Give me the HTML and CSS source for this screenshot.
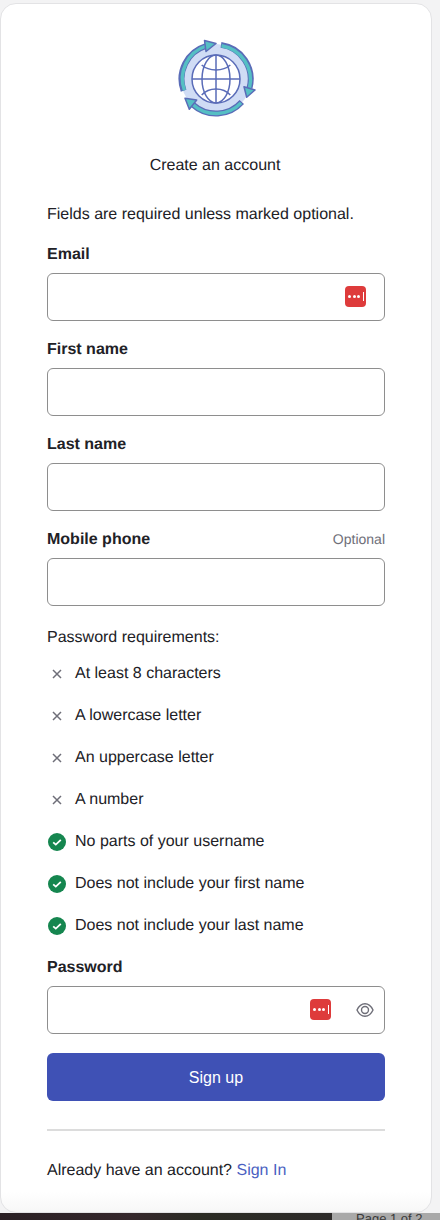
FILE: index.html
```html
<!DOCTYPE html>
<html lang="en">
<head>
    <meta charset="UTF-8">
    <meta name="viewport" content="width=device-width, initial-scale=1.0">
    <title>Create an account</title>
    <link rel="stylesheet" href="styles.css">
</head>
<body>
    <div class="card">
        <div class="logo">
            <svg width="80" height="82" viewBox="0 0 80 82" fill="none">
                <circle cx="40" cy="41" r="35" fill="#d0dcf5"/>
                <g stroke="#5a6cb8" stroke-width="6">
                    <path d="M30 8A34.500 34.500 0 0 0 7.600 52.800"/>
                    <path d="M45 6.900A34.500 34.500 0 0 1 73.500 50"/>
                    <path d="M65.800 64A34.500 34.500 0 0 1 17 66.700"/>
                </g>
                <g stroke="#55bfc4" stroke-width="3.400">
                    <path d="M30 8A34.500 34.500 0 0 0 8.400 52.300"/>
                    <path d="M45.500 7.800A34.500 34.500 0 0 1 73.500 50"/>
                    <path d="M65 64.800A34.500 34.500 0 0 1 17 66.700"/>
                </g>
                <g fill="#55bfc4" stroke="#5a6cb8" stroke-width="1.500" stroke-linejoin="round">
                    <path d="M28.500 2.500L40 5.500L30 13.500Z"/>
                    <path d="M68 48.700L79 52L70.700 59.300Z"/>
                    <path d="M9 60.300L20.700 62L13.300 71.300Z"/>
                </g>
                <g stroke="#5a6cb8" stroke-width="1.500">
                    <circle cx="40" cy="41" r="24" fill="#fff"/>
                    <ellipse cx="40" cy="41" rx="14" ry="24"/>
                    <path d="M40 17V65M16 41H64"/>
                    <path d="M25.700 27C33 33.500 47 33.500 54.300 27M25.700 57C33 49 47 49 54.300 57"/>
                </g>
            </svg>
        </div>
        <h1 class="title">Create an account</h1>
        <p class="hint">Fields are required unless marked optional.</p>

        <form class="signup">
            <div class="form-group">
                <label for="email">Email</label>
                <div class="field">
                    <input type="text" id="email">
                    <span class="key-icon"><i></i><i></i><i></i><b></b></span>
                </div>
            </div>
            <div class="form-group">
                <label for="firstName">First name</label>
                <div class="field"><input type="text" id="firstName"></div>
            </div>
            <div class="form-group">
                <label for="lastName">Last name</label>
                <div class="field"><input type="text" id="lastName"></div>
            </div>
            <div class="form-group">
                <div class="label-row">
                    <label for="phone">Mobile phone</label>
                    <span class="optional">Optional</span>
                </div>
                <div class="field"><input type="text" id="phone"></div>
            </div>

            <p class="req-title">Password requirements:</p>
            <ul class="reqs">
                <li><span class="req-icon"><svg width="12" height="12" viewBox="0 0 12 12"><path d="M2 2L10 10M10 2L2 10" stroke="#6e6e78" stroke-width="1.500"/></svg></span>At least 8 characters</li>
                <li><span class="req-icon"><svg width="12" height="12" viewBox="0 0 12 12"><path d="M2 2L10 10M10 2L2 10" stroke="#6e6e78" stroke-width="1.500"/></svg></span>A lowercase letter</li>
                <li><span class="req-icon"><svg width="12" height="12" viewBox="0 0 12 12"><path d="M2 2L10 10M10 2L2 10" stroke="#6e6e78" stroke-width="1.500"/></svg></span>An uppercase letter</li>
                <li><span class="req-icon"><svg width="12" height="12" viewBox="0 0 12 12"><path d="M2 2L10 10M10 2L2 10" stroke="#6e6e78" stroke-width="1.500"/></svg></span>A number</li>
                <li><span class="req-icon"><svg width="18" height="18" viewBox="0 0 18 18"><circle cx="9" cy="9" r="9" fill="#15864f"/><path d="M5.200 9.300L7.800 11.600L12.800 6.800" fill="none" stroke="#fff" stroke-width="1.800"/></svg></span>No parts of your username</li>
                <li><span class="req-icon"><svg width="18" height="18" viewBox="0 0 18 18"><circle cx="9" cy="9" r="9" fill="#15864f"/><path d="M5.200 9.300L7.800 11.600L12.800 6.800" fill="none" stroke="#fff" stroke-width="1.800"/></svg></span>Does not include your first name</li>
                <li><span class="req-icon"><svg width="18" height="18" viewBox="0 0 18 18"><circle cx="9" cy="9" r="9" fill="#15864f"/><path d="M5.200 9.300L7.800 11.600L12.800 6.800" fill="none" stroke="#fff" stroke-width="1.800"/></svg></span>Does not include your last name</li>
            </ul>

            <div class="form-group password-group">
                <label for="password">Password</label>
                <div class="field">
                    <input type="password" id="password">
                    <span class="key-icon key-shift"><i></i><i></i><i></i><b></b></span>
                    <svg class="eye" width="18" height="18" viewBox="0 0 18 18" fill="none" stroke="#6e6e78" stroke-width="1.400">
                        <path d="M1 9C3 4.700 5.800 2.700 9 2.700S15 4.700 17 9C15 13.300 12.200 15.300 9 15.300S3 13.300 1 9Z"/>
                        <circle cx="9" cy="9" r="3.500"/>
                    </svg>
                </div>
            </div>

            <button type="submit">Sign up</button>
        </form>

        <hr class="rule">
        <p class="signin">Already have an account? <a href="#">Sign In</a></p>
    </div>

    <div class="below">
        <div class="below-photo"></div>
        <div class="below-page">Page 1 of 2</div>
    </div>
</body>
</html>
```

FILE: styles.css
```css
html, body {
    height: 1220px;
    overflow: hidden;
}

body {
    font-family: "Liberation Sans", Arial, sans-serif;
    font-size: 16px;
    color: #212126;
    background-color: #f3f3f4;
    margin: 0;
    padding: 3px 0 0;
    box-sizing: border-box;
    text-rendering: geometricPrecision;
}

.card {
    width: 432px;
    height: 1210px;
    box-sizing: border-box;
    padding: 34px 46px 0;
    background: linear-gradient(to bottom, #fff 1188px, #f7f7f7 100%);
    border: 1px solid #e3e3e5;
    border-radius: 16px;
}

.logo {
    display: flex;
    justify-content: center;
    height: 82px;
}

.title {
    margin: 36px 2px 0 0;
    font-size: 16px;
    font-weight: normal;
    line-height: 20px;
    text-align: center;
}

.hint {
    margin: 29px 0 0;
    line-height: 20px;
}

.signup {
    margin-top: 19px;
}

.form-group {
    margin-bottom: 18px;
}

.password-group {
    margin-top: 10px;
}

label {
    display: block;
    font-weight: bold;
    line-height: 20px;
    padding-top: 1px;
    margin-bottom: 8px;
}

.label-row {
    display: flex;
    justify-content: space-between;
    align-items: baseline;
}

.optional {
    font-size: 14px;
    color: #6e6e78;
}

.field {
    position: relative;
    height: 48px;
}

input[type="text"], input[type="password"] {
    display: block;
    width: 100%;
    height: 48px;
    box-sizing: border-box;
    border: 1px solid #8e8e8e;
    border-radius: 6px;
    background-color: #fff;
}

.key-icon {
    position: absolute;
    top: 13px;
    right: 19px;
    width: 21px;
    height: 21px;
    box-sizing: border-box;
    padding-left: 3px;
    display: flex;
    align-items: center;
    gap: 1.500px;
    background-color: #de3b3b;
    border-radius: 4px;
}

.key-icon i {
    width: 3px;
    height: 3px;
    border-radius: 50%;
    background-color: #fff;
}

.key-icon b {
    width: 1px;
    height: 9px;
    margin-left: 1px;
    background-color: #fff;
}

.key-shift {
    right: 54px;
}

.eye {
    position: absolute;
    top: 15px;
    right: 11px;
}

.req-title {
    margin: 22px 0 0;
    line-height: 20px;
}

.reqs {
    list-style: none;
    margin: 5px 0 0;
    padding: 0;
}

.reqs li {
    display: flex;
    align-items: center;
    height: 42px;
    line-height: 20px;
}

.req-icon {
    display: flex;
    align-items: center;
    justify-content: center;
    width: 19px;
    margin-right: 9px;
}

button {
    display: block;
    width: 100%;
    height: 48px;
    margin-top: 19px;
    padding-top: 2px;
    font-family: inherit;
    font-size: 16px;
    color: #fff;
    background-color: #3f51b5;
    border: none;
    border-radius: 6px;
}

.rule {
    height: 2px;
    margin: 28px 0 0;
    border: none;
    background-color: #dcdcdc;
}

.signin {
    margin: 30px 0 0;
    line-height: 20px;
}

.signin a {
    color: #4a5fc1;
    text-decoration: none;
}

.below {
    display: flex;
    height: 7px;
    overflow: hidden;
}

.below-photo {
    width: 332px;
    background: linear-gradient(to right, #2a2024, #35282c 40%, #2b2c24 60%, #2e2b2a);
}

.below-page {
    flex: 1;
    padding: 3px 0 0 24px;
    margin-top: -3px;
    font-size: 13px;
    line-height: 12px;
    color: #3a3a3a;
    background-color: #a9a9a9;
}
```
